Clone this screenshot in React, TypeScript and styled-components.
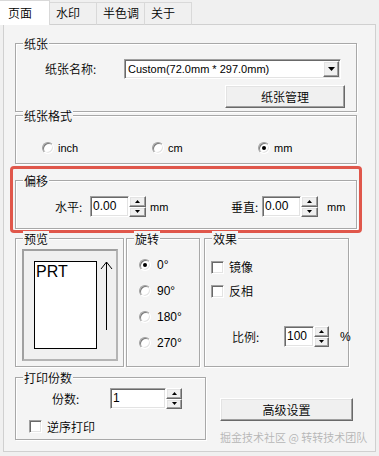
import React from "react";
import styled, { createGlobalStyle, css } from "styled-components";

const GlobalStyle = createGlobalStyle`
  html, body { margin: 0; padding: 0; background: #f0f0f0; }
  body {
    font-family: "Noto Sans CJK SC", "Liberation Sans", sans-serif;
    font-size: 12px;
    font-weight: 350;
    color: #000;
  }
  * { box-sizing: border-box; }
`;

const sunken = css`
  border: 1px solid;
  border-color: #a0a0a0 #ffffff #ffffff #a0a0a0;
  box-shadow: inset 1px 1px 0 #696969, inset -1px -1px 0 #e3e3e3;
  background: #fff;
`;

const raised = css`
  border: 1px solid;
  border-color: #ffffff #696969 #696969 #ffffff;
  box-shadow: inset -1px -1px 0 #a0a0a0, inset 1px 1px 0 #e3e3e3;
  background: #f0f0f0;
`;

const latin = css`
  font-family: "Liberation Sans", sans-serif;
  font-weight: 400;
`;

const Window = styled.div`
  width: 379px;
  height: 456px;
  overflow: hidden;
  display: flex;
  flex-direction: column;
`;

const TabBar = styled.div`
  display: flex;
  align-items: flex-end;
  height: 25px;
`;

const Tab = styled.div<{ $w: number; $active?: boolean }>`
  width: ${(p) => p.$w}px;
  height: ${(p) => (p.$active ? 25 : 23)}px;
  padding-left: ${(p) => (p.$active ? 8 : 6)}px;
  padding-top: ${(p) => (p.$active ? 4 : 2)}px;
  line-height: 16px;
  font-size: 12px;
  border-top: 1px solid #d9d9d9;
  border-right: 1px solid #d9d9d9;
  border-bottom: ${(p) => (p.$active ? "none" : "1px solid #d0d0d0")};
  background: ${(p) => (p.$active ? "#ffffff" : "#f0f0f0")};
  flex-shrink: 0;
`;

const TabFill = styled.div`
  width: 184px;
  height: 1px;
  background: #d0d0d0;
`;

const Panel = styled.div`
  margin-left: 3px;
  width: 373px;
  height: 427px;
  border: 1px solid #d0d0d0;
  border-top: none;
  background: #f4f4f4;
  padding: 18px 0 0 11px;
  display: flex;
  flex-direction: column;
`;

const Group = styled.div<{ $w: number; $h: number; $mt?: number }>`
  position: relative;
  width: ${(p) => p.$w}px;
  height: ${(p) => p.$h}px;
  margin-top: ${(p) => p.$mt ?? 0}px;
  flex-shrink: 0;
  border: 1px solid #a8a8a8;
  box-shadow: inset 1px 1px 0 #fff, 1px 1px 0 #fff;
`;

const Legend = styled.span`
  position: absolute;
  top: -8px;
  left: 7px;
  padding: 0 1px;
  background: #f4f4f4;
  line-height: 15px;
  font-size: 12px;
  white-space: nowrap;
`;

const PaperBody = styled.div`
  display: flex;
  flex-direction: column;
  padding: 15px 0 0 29px;
`;

const FlexRow = styled.div`
  display: flex;
  align-items: center;
`;

const FieldLabel = styled.span<{ $w: number }>`
  width: ${(p) => p.$w}px;
  flex-shrink: 0;
  line-height: 16px;
  white-space: nowrap;
`;

const Select = styled.div`
  ${sunken};
  width: 217px;
  height: 20px;
  display: flex;
`;

const SelectText = styled.span`
  ${latin};
  flex: 1;
  font-size: 11px;
  line-height: 18px;
  padding-left: 3px;
  white-space: nowrap;
`;

const DropBtn = styled.span`
  ${raised};
  width: 16px;
  margin: 1px;
  display: flex;
  align-items: center;
  justify-content: center;
`;

const PushButton = styled.div<{ $w: number; $h: number; $ml?: number; $mt?: number }>`
  ${raised};
  width: ${(p) => p.$w}px;
  height: ${(p) => p.$h}px;
  margin-left: ${(p) => p.$ml ?? 0}px;
  margin-top: ${(p) => p.$mt ?? 0}px;
  display: flex;
  align-items: center;
  justify-content: center;
  font-size: 12px;
  flex-shrink: 0;
`;

const RadioGrid = styled.div`
  display: grid;
  grid-template-columns: 110px 106px auto;
  padding: 26px 0 0 26px;
`;

const RadioItem = styled.label<{ $h?: number }>`
  ${latin};
  display: flex;
  align-items: center;
  gap: 4px;
  height: ${(p) => p.$h ?? 12}px;
  font-size: 11px;
  white-space: nowrap;
`;

const Radio = styled.span<{ $checked?: boolean }>`
  width: 12px;
  height: 12px;
  flex-shrink: 0;
  border-radius: 50%;
  background: #fff;
  border: 1px solid;
  border-color: #a0a0a0 #ffffff #ffffff #a0a0a0;
  box-shadow: inset 1px 1px 0 #7a7a7a, inset -1px -1px 0 #e3e3e3;
  display: flex;
  align-items: center;
  justify-content: center;
  &::after {
    content: "";
    width: 4px;
    height: 4px;
    border-radius: 50%;
    background: #000;
    display: ${(p) => (p.$checked ? "block" : "none")};
  }
`;

const Check = styled.span`
  ${sunken};
  width: 13px;
  height: 13px;
  flex-shrink: 0;
`;

const RedFrame = styled.div`
  margin: 2px -5px 0;
  width: 352px;
  border: 3px solid #e0574b;
  border-radius: 4px;
  padding: 11px 2px 1px;
  flex-shrink: 0;
`;

const OffsetRow = styled.div`
  display: flex;
  align-items: center;
  padding: 15px 0 0 39px;
`;

const Unit = styled.span<{ $w?: number; $ml: number; $size?: number }>`
  ${latin};
  margin-left: ${(p) => p.$ml}px;
  width: ${(p) => (p.$w ? `${p.$w}px` : "auto")};
  flex-shrink: 0;
  font-size: ${(p) => p.$size ?? 11}px;
`;

const SpinBox = styled.div<{ $w: number }>`
  display: flex;
  width: ${(p) => p.$w}px;
  height: 21px;
  flex-shrink: 0;
`;

const SpinText = styled.span`
  ${sunken};
  ${latin};
  flex: 1;
  font-size: 12px;
  line-height: 19px;
  padding-left: 2px;
`;

const SpinCol = styled.div<{ $w: number }>`
  display: flex;
  flex-direction: column;
  width: ${(p) => p.$w}px;
`;

const SpinBtn = styled.span`
  ${raised};
  flex: 1;
  display: flex;
  align-items: center;
  justify-content: center;
`;

const MidRow = styled.div`
  display: flex;
  margin-top: 5px;
`;

const PreviewBody = styled.div`
  padding: 10px 0 0 6px;
`;

const Well = styled.div`
  width: 96px;
  height: 112px;
  border: 2px solid;
  border-color: #a0a0a0 #b4b4b4 #b4b4b4 #a0a0a0;
  background: #f0f0f0;
  display: flex;
  align-items: flex-start;
`;

const Paper = styled.div`
  ${latin};
  width: 63px;
  height: 88px;
  margin: 10px 0 0 10px;
  background: #fff;
  border: 1px solid #000;
  font-size: 16px;
  line-height: 16px;
  padding: 2px 0 0 1px;
`;

const ArrowSvg = styled.svg`
  margin: 10px 0 0 3px;
  flex-shrink: 0;
`;

const SideGroupSpacer = styled.div<{ $ml: number }>`
  margin-left: ${(p) => p.$ml}px;
  flex-shrink: 0;
`;

const RotBody = styled.div`
  display: flex;
  flex-direction: column;
  padding: 13px 0 0 12px;
`;

const DegreeText = styled.span`
  ${latin};
  margin-left: 2px;
  font-size: 12px;
`;

const EffectBody = styled.div`
  display: flex;
  flex-direction: column;
  padding: 16px 0 0 6px;
`;

const CheckRow = styled.label<{ $h?: number; $mt?: number }>`
  display: flex;
  align-items: center;
  gap: 5px;
  height: ${(p) => p.$h ?? 24}px;
  margin-top: ${(p) => p.$mt ?? 0}px;
  line-height: 16px;
`;

const RatioRow = styled.div`
  display: flex;
  align-items: center;
  margin-top: 23px;
  padding-left: 21px;
`;

const BottomRow = styled.div`
  display: flex;
  margin-top: 10px;
`;

const PrintBody = styled.div`
  display: flex;
  flex-direction: column;
  padding: 10px 0 0 13px;
`;

const CopiesRow = styled.div`
  display: flex;
  align-items: center;
  padding-left: 23px;
`;

const RightCol = styled.div`
  display: flex;
  flex-direction: column;
  margin-left: 14px;
`;

const Watermark = styled.div`
  margin-top: 9px;
  font-size: 11px;
  line-height: 14px;
  color: #b6b6b6;
  white-space: nowrap;
`;

const TriUp = () => (
  <svg width="5" height="3" viewBox="0 0 5 3">
    <path d="M2.5 0 L5 3 L0 3 Z" fill="#000" />
  </svg>
);

const TriDown = ({ w = 5, h = 3 }: { w?: number; h?: number }) => (
  <svg width={w} height={h} viewBox={`0 0 ${w} ${h}`}>
    <path d={`M0 0 L${w} 0 L${w / 2} ${h} Z`} fill="#000" />
  </svg>
);

const Spinner = ({ w, bw, value }: { w: number; bw: number; value: string }) => (
  <SpinBox $w={w}>
    <SpinText>{value}</SpinText>
    <SpinCol $w={bw}>
      <SpinBtn>
        <TriUp />
      </SpinBtn>
      <SpinBtn>
        <TriDown />
      </SpinBtn>
    </SpinCol>
  </SpinBox>
);

export default function App() {
  return (
    <>
      <GlobalStyle />
      <Window>
        <TabBar>
          <Tab $w={50} $active>
            页面
          </Tab>
          <Tab $w={47}>水印</Tab>
          <Tab $w={48}>半色调</Tab>
          <Tab $w={47}>关于</Tab>
          <TabFill />
        </TabBar>
        <Panel>
          <Group $w={342} $h={69}>
            <Legend>纸张</Legend>
            <PaperBody>
              <FlexRow>
                <FieldLabel $w={79}>纸张名称:</FieldLabel>
                <Select>
                  <SelectText>Custom(72.0mm * 297.0mm)</SelectText>
                  <DropBtn>
                    <TriDown w={7} h={4} />
                  </DropBtn>
                </Select>
              </FlexRow>
              <PushButton $w={120} $h={23} $ml={180} $mt={6}>
                纸张管理
              </PushButton>
            </PaperBody>
          </Group>

          <Group $w={342} $h={49} $mt={3}>
            <Legend>纸张格式</Legend>
            <RadioGrid>
              <RadioItem>
                <Radio />
                inch
              </RadioItem>
              <RadioItem>
                <Radio />
                cm
              </RadioItem>
              <RadioItem>
                <Radio $checked />
                mm
              </RadioItem>
            </RadioGrid>
          </Group>

          <RedFrame>
            <Group $w={342} $h={49}>
              <Legend>偏移</Legend>
              <OffsetRow>
                <FieldLabel $w={35}>水平:</FieldLabel>
                <Spinner w={56} bw={17} value="0.00" />
                <Unit $ml={4} $w={81}>
                  mm
                </Unit>
                <FieldLabel $w={31}>垂直:</FieldLabel>
                <Spinner w={56} bw={17} value="0.00" />
                <Unit $ml={9}>mm</Unit>
              </OffsetRow>
            </Group>
          </RedFrame>

          <MidRow>
            <Group $w={109} $h={129}>
              <Legend>预览</Legend>
              <PreviewBody>
                <Well>
                  <Paper>PRT</Paper>
                  <ArrowSvg width="13" height="70" viewBox="0 0 13 70">
                    <path d="M6.5 1 V69 M1 8 L6.5 1 L12 8" stroke="#000" strokeWidth="1" fill="none" />
                  </ArrowSvg>
                </Well>
              </PreviewBody>
            </Group>

            <SideGroupSpacer $ml={2}>
              <Group $w={74} $h={129}>
                <Legend>旋转</Legend>
                <RotBody>
                  {["0°", "90°", "180°", "270°"].map((d, i) => (
                    <RadioItem key={d} $h={26}>
                      <Radio $checked={i === 0} />
                      <DegreeText>{d}</DegreeText>
                    </RadioItem>
                  ))}
                </RotBody>
              </Group>
            </SideGroupSpacer>

            <SideGroupSpacer $ml={4}>
              <Group $w={145} $h={129}>
                <Legend>效果</Legend>
                <EffectBody>
                  <CheckRow>
                    <Check />
                    镜像
                  </CheckRow>
                  <CheckRow>
                    <Check />
                    反相
                  </CheckRow>
                  <RatioRow>
                    <FieldLabel $w={52}>比例:</FieldLabel>
                    <Spinner w={45} bw={15} value="100" />
                    <Unit $ml={11} $size={12}>
                      %
                    </Unit>
                  </RatioRow>
                </EffectBody>
              </Group>
            </SideGroupSpacer>
          </MidRow>

          <BottomRow>
            <Group $w={191} $h={63}>
              <Legend>打印份数</Legend>
              <PrintBody>
                <CopiesRow>
                  <FieldLabel $w={58}>份数:</FieldLabel>
                  <Spinner w={72} bw={16} value="1" />
                </CopiesRow>
                <CheckRow $h={13} $mt={11}>
                  <Check />
                  逆序打印
                </CheckRow>
              </PrintBody>
            </Group>
            <RightCol>
              <PushButton $w={133} $h={23} $mt={21}>
                高级设置
              </PushButton>
              <Watermark>掘金技术社区 @ 转转技术团队</Watermark>
            </RightCol>
          </BottomRow>
        </Panel>
      </Window>
    </>
  );
}
